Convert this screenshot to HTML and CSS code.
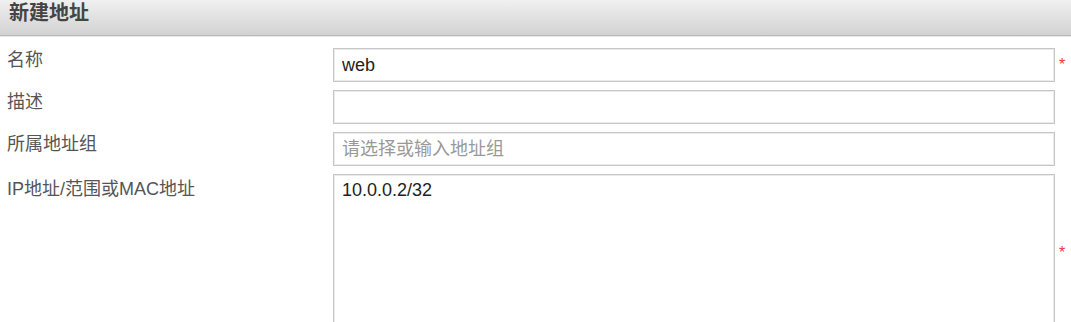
FILE: index.html
```html
<!DOCTYPE html>
<html lang="zh-CN">
<head>
  <meta charset="UTF-8" />
  <meta name="viewport" content="width=device-width, initial-scale=1.0"/>
  <title>新建地址</title>
  <link rel="stylesheet" href="styles.css">
</head>
<body>
  <div class="panel">
    <div class="panel-head">新建地址</div>
    <form class="form">
      <div class="row">
        <label for="name">名称</label>
        <div class="field"><input id="name" type="text" value="web"></div>
        <span class="req">*</span>
      </div>
      <div class="row">
        <label for="desc">描述</label>
        <div class="field"><input id="desc" type="text"></div>
        <span class="req"></span>
      </div>
      <div class="row">
        <label for="group">所属地址组</label>
        <div class="field"><input id="group" type="text" placeholder="请选择或输入地址组"></div>
        <span class="req"></span>
      </div>
      <div class="row">
        <label for="addr">IP地址/范围或MAC地址</label>
        <div class="field"><textarea id="addr">10.0.0.2/32</textarea></div>
        <span class="req">*</span>
      </div>
    </form>
  </div>
</body>
</html>
```

FILE: styles.css
```css
body {
  margin: 0;
  padding: 0;
  background: #fff;
  font-family: "Liberation Sans", "Noto Sans CJK SC", sans-serif;
  overflow: hidden;
}
.panel-head {
  height: 35px;
  line-height: 27px;
  padding: 0 9px;
  font-size: 20px;
  font-weight: bold;
  color: #444;
  background: linear-gradient(to bottom, #f0f0f0, #d2d2d2);
  border-bottom: 1px solid #b9b9b9;
  box-shadow: 0 1px 0 #e8e8e8;
}
.form {
  padding: 12px 0 0 7px;
  display: flex;
  flex-direction: column;
  gap: 8px;
}
.row {
  display: flex;
  align-items: flex-start;
}
.row label {
  width: 326px;
  flex: none;
  font-size: 18px;
  line-height: 24px;
  color: #555;
}
.row:last-child label {
  padding-top: 3px;
}
.field {
  flex: 1;
}
.field input,
.field textarea {
  display: block;
  width: 100%;
  box-sizing: border-box;
  margin: 0;
  border: 1px solid #c6c6c6;
  box-shadow: inset 0 0 0 1px #ebebeb;
  background: #fff;
  font-family: "Liberation Sans", "Noto Sans CJK SC", sans-serif;
  font-size: 18px;
  color: #222;
  outline: none;
}
.field input {
  height: 34px;
  padding: 0 8px;
}
.field input::placeholder {
  color: #999;
}
.field textarea {
  height: 158px;
  padding: 4px 8px;
  line-height: 22px;
  resize: none;
}
.req {
  width: 16px;
  flex: none;
  align-self: center;
  padding-left: 4px;
  box-sizing: border-box;
  color: #f33;
  font-size: 16px;
  line-height: 10px;
  height: 10px;
}
```
